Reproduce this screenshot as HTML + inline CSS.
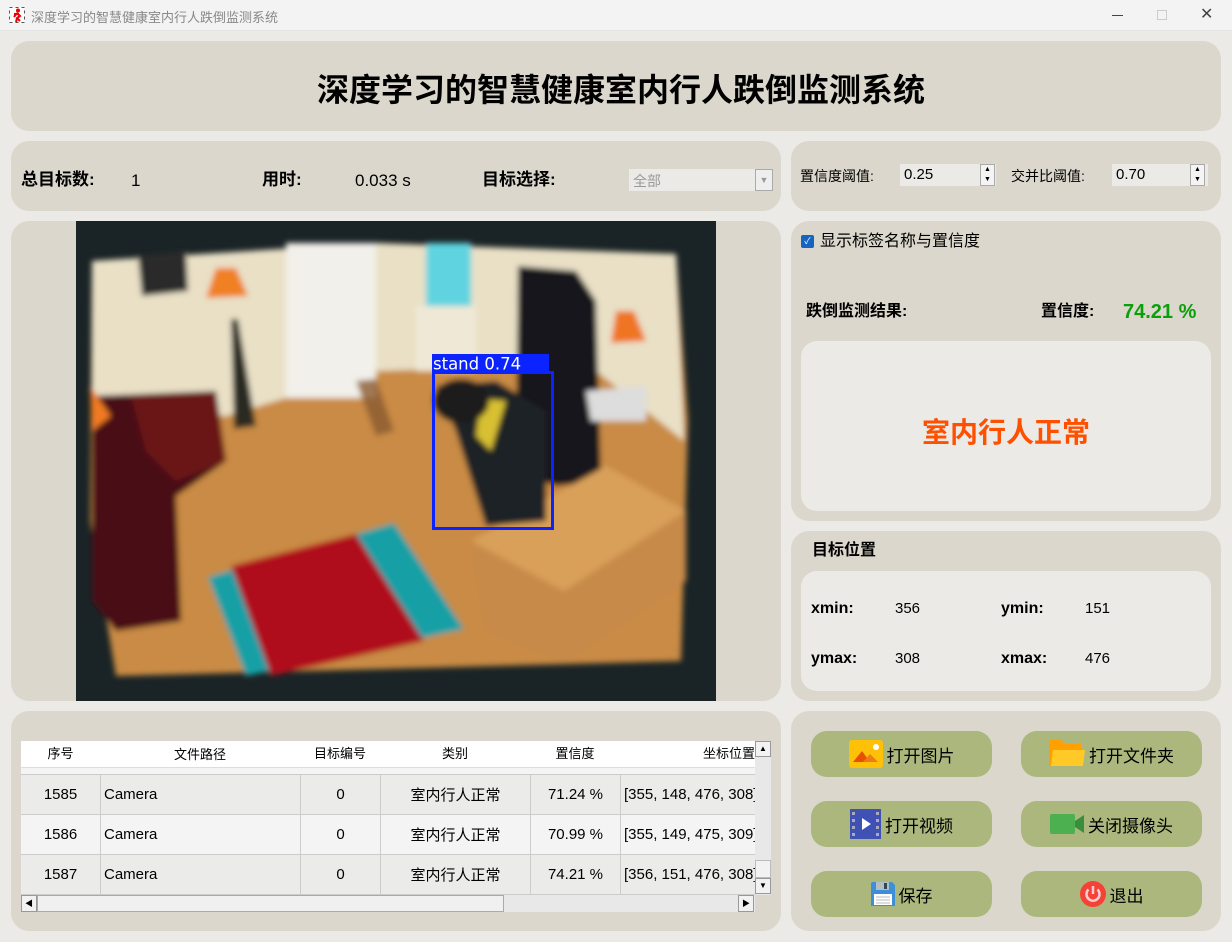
<!DOCTYPE html>
<html><head><meta charset="utf-8">
<style>
*{margin:0;padding:0;box-sizing:border-box}
body{width:1232px;height:942px;background:#ebeae6;font-family:"Liberation Sans","Noto Sans CJK SC",sans-serif;position:relative;overflow:hidden;color:#000}
.abs{position:absolute}
.p{position:absolute;background:#dbd7cc;border-radius:18px}
.tb{left:0;top:0;width:1232px;height:31px;background:#f3f3f3;border-bottom:1px solid #e5e5e5}
.b{font-weight:bold}
.l{line-height:20px}
.btn{position:absolute;width:181px;height:46px;background:#abb77c;border-radius:16px;display:flex;align-items:center;justify-content:center;font-size:17px;gap:4px}
table{border-collapse:collapse;font-size:15px}
td{border:1px solid #ccc;height:40px;text-align:center}
</style></head><body>
<div class="abs tb"></div>
<svg class="abs" style="left:9px;top:7px" width="16" height="16" viewBox="0 0 16 16"><rect x="0.5" y="0.5" width="15" height="15" fill="#fff" stroke="#555" stroke-dasharray="3 3"/><circle cx="9" cy="3.5" r="2" fill="#e00"/><path d="M8 6 L5 10 M8 6 L11 9 L8 11 L7 15 M8 11 L11 14 M5 7 L10 7" stroke="#e00" stroke-width="2" fill="none"/></svg>
<div class="abs" style="left:31px;top:7px;font-size:13px;color:#888">深度学习的智慧健康室内行人跌倒监测系统</div>
<div class="abs" style="left:1112px;top:15px;width:11px;height:1px;background:#444"></div>
<div class="abs" style="left:1157px;top:10px;width:10px;height:10px;border:1px solid #ccc"></div>
<div class="abs" style="left:1200px;top:4px;font-size:16px;color:#444">✕</div>

<div class="p" style="left:11px;top:41px;width:1210px;height:90px"></div>
<div class="abs b" style="left:5px;top:69px;width:1232px;text-align:center;font-size:32px;line-height:42px">深度学习的智慧健康室内行人跌倒监测系统</div>

<div class="p" style="left:11px;top:141px;width:770px;height:70px"></div>
<div class="abs b l" style="left:21px;top:170px;font-size:17px">总目标数:</div>
<div class="abs l" style="left:131px;top:171px;font-size:17px">1</div>
<div class="abs b l" style="left:262px;top:170px;font-size:17px">用时:</div>
<div class="abs l" style="left:355px;top:171px;font-size:17px">0.033 s</div>
<div class="abs b l" style="left:482px;top:170px;font-size:17px">目标选择:</div>
<div class="abs" style="left:629px;top:169px;width:144px;height:22px;background:#ebeae6;color:#999;font-size:14px;padding:2px 4px">全部</div>
<div class="abs" style="left:755px;top:169px;width:18px;height:22px;background:#eee;border:1px solid #aaa;color:#999;font-size:9px;text-align:center;line-height:20px">▼</div>

<div class="p" style="left:791px;top:141px;width:430px;height:70px"></div>
<div class="abs l" style="left:800px;top:166px;font-size:14px">置信度阈值:</div>
<div class="abs" style="left:900px;top:164px;width:96px;height:22px;background:#ebeae6;font-size:15px;padding:2px 4px">0.25</div>
<div class="abs" style="left:980px;top:164px;width:15px;height:22px;border:1px solid #aaa;background:#f4f4f4;font-size:7px;line-height:10px;text-align:center">▲<br>▼</div>
<div class="abs l" style="left:1011px;top:166px;font-size:14px">交并比阈值:</div>
<div class="abs" style="left:1112px;top:164px;width:96px;height:22px;background:#ebeae6;font-size:15px;padding:2px 4px">0.70</div>
<div class="abs" style="left:1190px;top:164px;width:15px;height:22px;border:1px solid #aaa;background:#f4f4f4;font-size:7px;line-height:10px;text-align:center">▲<br>▼</div>

<div class="p" style="left:11px;top:221px;width:770px;height:480px"></div>
<svg class="abs" style="left:76px;top:221px" width="640" height="480" viewBox="0 0 640 480">
<defs><filter id="bl"><feGaussianBlur stdDeviation="3"/></filter></defs>
<rect width="640" height="480" fill="#1a2426"/>
<g filter="url(#bl)">
<path d="M16 40 L300 22 L600 33 L612 200 L605 440 L40 455 L14 300 Z" fill="#c98b45"/>
<path d="M16 40 L300 22 L600 33 L608 220 L520 150 L440 145 L300 150 L150 195 L16 185 Z" fill="#e9e0c6"/>
<rect x="210" y="22" width="90" height="155" fill="#f2f0ea"/>
<rect x="350" y="22" width="45" height="63" fill="#5fd4e0"/>
<rect x="340" y="85" width="60" height="65" fill="#efe8d6"/>
<path d="M442 45 L500 50 L520 80 L525 260 L480 265 L440 250 Z" fill="#15171a"/>
<path d="M62 35 L110 30 L112 70 L66 75 Z" fill="#2a2a2a"/>
<path d="M140 47 L160 47 L172 75 L130 77 Z" fill="#f08020"/>
<path d="M155 98 L162 98 L180 205 L158 208 Z" fill="#2a2a22"/>
<path d="M540 90 L558 90 L570 120 L535 122 Z" fill="#f07520"/>
<path d="M510 170 L570 165 L570 200 L515 200 Z" fill="#ddd"/>
<path d="M16 175 L140 170 L150 240 L100 275 L105 400 L40 410 L16 380 Z" fill="#4a1012"/>
<path d="M55 175 L140 172 L150 240 L100 260 L70 230 Z" fill="#6a1418"/>
<path d="M14 165 L35 195 L16 210 Z" fill="#f07a20"/>
<path d="M280 160 L300 158 L318 210 L300 215 Z" fill="#8a5a30" opacity=".8"/>
<path d="M132 356 L318 302 L388 408 L170 455 Z" fill="#14a0a6"/>
<path d="M155 345 L280 313 L348 420 L195 455 Z" fill="#b0101e"/>
<path d="M395 320 L530 245 L610 290 L610 360 L490 440 L410 410 Z" fill="#c88a48"/>
<path d="M395 320 L530 245 L610 290 L488 370 Z" fill="#d9a05a"/>
<path d="M360 165 L420 160 L470 190 L470 300 L410 305 L380 210 Z" fill="#1d2226"/>
<path d="M405 178 L430 180 L415 230 L400 215 Z" fill="#d8c030"/>
<ellipse cx="385" cy="180" rx="28" ry="22" fill="#1a1a1a"/>
</g>
<rect x="356" y="133" width="117" height="18" fill="#0a23ff"/>
<text x="357" y="148.5" fill="#fff" font-family="DejaVu Sans,sans-serif" font-size="16.5">stand 0.74</text>
<rect x="357.5" y="151.5" width="119" height="156" fill="none" stroke="#0a23ff" stroke-width="3"/>
</svg>

<div class="p" style="left:791px;top:221px;width:430px;height:300px"></div>
<div class="abs" style="left:801px;top:235px;width:13px;height:13px;background:#1565c0;border-radius:2px;color:#fff;font-size:9px;text-align:center;line-height:13px">✓</div>
<div class="abs l" style="left:820px;top:232px;font-size:16px">显示标签名称与置信度</div>
<div class="abs b l" style="left:806px;top:302px;font-size:16px">跌倒监测结果:</div>
<div class="abs b l" style="left:1041px;top:302px;font-size:16px">置信度:</div>
<div class="abs b" style="left:1123px;top:300px;font-size:20px;line-height:24px;color:#0aa00a">74.21 %</div>
<div class="abs" style="left:801px;top:341px;width:410px;height:170px;background:#ebeae6;border-radius:16px"></div>
<div class="abs b" style="left:801px;top:414px;width:410px;text-align:center;font-size:28px;line-height:38px;color:#ff5000">室内行人正常</div>

<div class="p" style="left:791px;top:531px;width:430px;height:170px"></div>
<div class="abs b l" style="left:812px;top:541px;font-size:16px">目标位置</div>
<div class="abs" style="left:801px;top:571px;width:410px;height:120px;background:#ebeae6;border-radius:16px"></div>
<div class="abs b l" style="left:811px;top:599px;font-size:16px">xmin:</div>
<div class="abs l" style="left:895px;top:599px;font-size:15px">356</div>
<div class="abs b l" style="left:1001px;top:599px;font-size:16px">ymin:</div>
<div class="abs l" style="left:1085px;top:599px;font-size:15px">151</div>
<div class="abs b l" style="left:811px;top:649px;font-size:16px">ymax:</div>
<div class="abs l" style="left:895px;top:649px;font-size:15px">308</div>
<div class="abs b l" style="left:1001px;top:649px;font-size:16px">xmax:</div>
<div class="abs l" style="left:1085px;top:649px;font-size:15px">476</div>

<div class="p" style="left:11px;top:711px;width:770px;height:220px"></div>
<div class="abs" style="left:21px;top:741px;width:734px;height:154px;overflow:hidden;background:#f4f4f4">
<div style="height:26px;background:#fff;display:flex;font-size:13px">
<div style="width:79px;text-align:center;line-height:26px">序号</div>
<div style="width:200px;text-align:center;line-height:28px">文件路径</div>
<div style="width:80px;text-align:center;line-height:26px">目标编号</div>
<div style="width:150px;text-align:center;line-height:26px">类别</div>
<div style="width:90px;text-align:center;line-height:26px">置信度</div>
<div style="width:135px;text-align:right;line-height:26px">坐标位置</div>
</div>
<table style="position:absolute;top:33px;left:-1px;width:760px;table-layout:fixed">
<colgroup><col style="width:80px"><col style="width:200px"><col style="width:80px"><col style="width:150px"><col style="width:90px"><col style="width:160px"></colgroup>
<tr style="background:#ebebea"><td>1585</td><td style="text-align:left;padding-left:3px">Camera</td><td>0</td><td>室内行人正常</td><td>71.24 %</td><td style="text-align:left;padding-left:3px;white-space:nowrap">[355, 148, 476, 308]</td></tr>
<tr style="background:#f4f4f4"><td>1586</td><td style="text-align:left;padding-left:3px">Camera</td><td>0</td><td>室内行人正常</td><td>70.99 %</td><td style="text-align:left;padding-left:3px;white-space:nowrap">[355, 149, 475, 309]</td></tr>
<tr style="background:#ebebea"><td>1587</td><td style="text-align:left;padding-left:3px">Camera</td><td>0</td><td>室内行人正常</td><td>74.21 %</td><td style="text-align:left;padding-left:3px;white-space:nowrap">[356, 151, 476, 308]</td></tr>
</table>
<div style="position:absolute;left:0;top:26px;width:734px;height:1px;background:#ddd"></div>
</div>
<div class="abs" style="left:755px;top:741px;width:16px;height:154px;background:#e8e8e8"></div>
<div class="abs" style="left:755px;top:741px;width:16px;height:16px;background:#f2f2f2;border:1px solid #999;font-size:8px;text-align:center;line-height:14px">▲</div>
<div class="abs" style="left:755px;top:860px;width:16px;height:18px;background:#f2f2f2;border:1px solid #bbb"></div>
<div class="abs" style="left:755px;top:878px;width:16px;height:16px;background:#f2f2f2;border:1px solid #999;font-size:8px;text-align:center;line-height:14px">▼</div>
<div class="abs" style="left:21px;top:895px;width:734px;height:17px;background:#e8e8e8"></div>
<div class="abs" style="left:21px;top:895px;width:16px;height:17px;background:#f2f2f2;border:1px solid #999;font-size:8px;text-align:center;line-height:15px">◀</div>
<div class="abs" style="left:37px;top:895px;width:467px;height:17px;background:#f0f0f0;border:1px solid #aaa"></div>
<div class="abs" style="left:738px;top:895px;width:16px;height:17px;background:#f2f2f2;border:1px solid #999;font-size:8px;text-align:center;line-height:15px">▶</div>

<div class="p" style="left:791px;top:711px;width:430px;height:220px"></div>
<div class="btn" style="left:811px;top:731px"><svg width="34" height="28" viewBox="0 0 34 28"><rect width="34" height="28" rx="3" fill="#ffc107"/><path d="M4 22 L13 11 L21 22 Z" fill="#e65100"/><path d="M14 22 L21 14 L29 22 Z" fill="#ef7a1a"/><circle cx="27" cy="7" r="3" fill="#fff"/></svg>打开图片</div>
<div class="btn" style="left:1021px;top:731px"><svg width="36" height="28" viewBox="0 0 36 28"><path d="M0 2 Q0 0 2 0 L12 0 L15 4 L32 4 L32 26 L0 26 Z" fill="#ffa000"/><path d="M4 10 L36 10 L34 26 L2 26 Z" fill="#ffca28"/></svg>打开文件夹</div>
<div class="btn" style="left:811px;top:801px"><svg width="31" height="30" viewBox="0 0 31 30"><rect width="31" height="30" fill="#3f51b5"/><g fill="#aab"><rect x="2" y="3" width="3" height="3"/><rect x="2" y="10" width="3" height="3"/><rect x="2" y="17" width="3" height="3"/><rect x="2" y="24" width="3" height="3"/><rect x="26" y="3" width="3" height="3"/><rect x="26" y="10" width="3" height="3"/><rect x="26" y="17" width="3" height="3"/><rect x="26" y="24" width="3" height="3"/></g><path d="M12 9 L21 15 L12 21 Z" fill="#fff"/></svg>打开视频</div>
<div class="btn" style="left:1021px;top:801px"><svg width="34" height="22" viewBox="0 0 34 22"><rect width="25" height="20" y="1" rx="2" fill="#4caf50"/><path d="M25 8 L34 2 L34 20 L25 14 Z" fill="#388e3c"/></svg>关闭摄像头</div>
<div class="btn" style="left:811px;top:871px"><svg width="24" height="24" viewBox="0 0 24 24"><path d="M0 2 Q0 0 2 0 L21 0 L24 3 L24 24 L0 24 Z" fill="#3f8fd8"/><rect x="5" y="0" width="13" height="8" fill="#b0bec5"/><rect x="13" y="1" width="3" height="6" fill="#37474f"/><rect x="3" y="12" width="18" height="11" fill="#fff"/><path d="M5 15 H19 M5 18 H19 M5 21 H19" stroke="#bbb"/></svg>保存</div>
<div class="btn" style="left:1021px;top:871px"><svg width="26" height="26" viewBox="0 0 26 26"><circle cx="13" cy="13" r="13" fill="#f44336"/><path d="M8.5 8.5 A6.5 6.5 0 1 0 17.5 8.5" stroke="#ffcdd2" stroke-width="2.5" fill="none"/><path d="M13 5 V13" stroke="#ffcdd2" stroke-width="2.5"/></svg>退出</div>
</body></html>
